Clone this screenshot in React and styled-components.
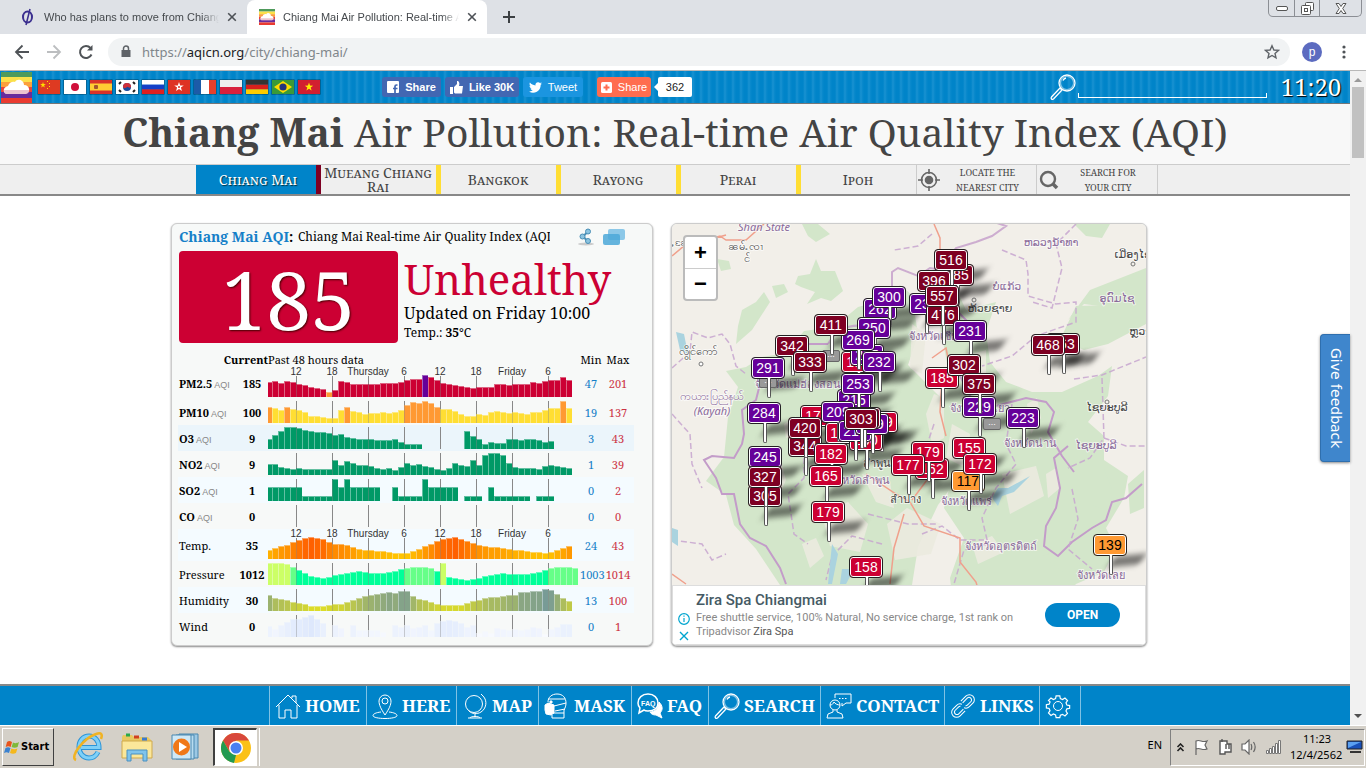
import React from 'react';
import styled, { createGlobalStyle, css } from 'styled-components';

const serif = '"Droid Serif", "Noto Serif", "DejaVu Serif Condensed", "DejaVu Serif", serif';
const sans = '"Liberation Sans", Arial, sans-serif';
const ui = '"Noto Sans", "DejaVu Sans", sans-serif';
const blue = '#0084c9';

const Global = createGlobalStyle`
  *, *::before, *::after { box-sizing: border-box; }
  body { margin: 0; background: #fff; font-family: ${serif}; color: #000; }
  button, input { font: inherit; color: inherit; margin: 0; padding: 0; border: 0; background: none; }
  a { color: inherit; text-decoration: none; }
  svg { display: block; flex: none; }
`;

const Screen = styled.div`
  display: flex;
  flex-direction: column;
  height: 100vh;
  overflow: hidden;
`;

/* ---------- browser frame ---------- */

const TabStrip = styled.header`
  display: flex;
  align-items: stretch;
  height: 34px;
  flex: none;
  background: #dee1e6;
  font: 11px/34px ${sans};
  color: #45494d;
`;

const Tab = styled.div`
  display: flex;
  align-items: center;
  gap: 8px;
  width: ${p => (p.$active ? 240 : 247)}px;
  padding: 0 10px 0 ${p => (p.$active ? 12 : 20)}px;
  border-radius: 8px 8px 0 0;
  background: ${p => (p.$active ? '#fff' : 'transparent')};
`;

const TabTitle = styled.span`
  flex: 1;
  overflow: hidden;
  white-space: nowrap;
  mask-image: linear-gradient(90deg, #000 90%, transparent);
`;

const IconButton = styled.button`
  display: flex;
  align-items: center;
  justify-content: center;
  width: ${p => p.$w || 16}px;
  flex: none;
`;

const WindowButtons = styled.div`
  display: flex;
  height: 17px;
  margin: 0 4px 0 auto;
  border: 1px solid #8b8e94;
  border-top: 0;
  border-radius: 0 0 5px 5px;
  button + button { border-left: 1px solid #8b8e94; }
`;

const Toolbar = styled.div`
  display: flex;
  align-items: center;
  height: 37px;
  flex: none;
  padding-left: 12px;
  background: #fff;
  border-bottom: 1px solid #b8b8b8;
`;

const AddressBar = styled.label`
  display: flex;
  align-items: center;
  gap: 10px;
  flex: 1;
  height: 28px;
  margin: 0 12px;
  padding: 0 10px 0 12px;
  border-radius: 14px;
  background: #f1f3f4;
  font: 13px/28px ${ui};
  color: #80868b;
  b { color: #202124; font-weight: 400; }
`;

const Url = styled.span`
  flex: 1;
`;

const Avatar = styled.button`
  width: 20px;
  height: 20px;
  border-radius: 50%;
  background: #5c6bc0;
  color: #fff;
  font: 12px/20px ${sans};
`;

const Viewport = styled.div`
  display: flex;
  flex: 1;
  min-height: 0;
`;

const Page = styled.div`
  display: flex;
  flex-direction: column;
  flex: 1;
  min-width: 0;
  position: relative;
`;

const Scrollbar = styled.div`
  display: flex;
  flex-direction: column;
  justify-content: space-between;
  width: 16px;
  padding: 6px 2px;
  background: #f1f1f1;
`;

const Thumb = styled.div`
  height: 71px;
  margin: 4px 0 auto;
  background: #c1c1c1;
`;

/* ---------- site header ---------- */

const TopBar = styled.div`
  display: flex;
  align-items: center;
  height: 33px;
  flex: none;
  padding: 0 5px 0 1px;
  border-bottom: 1px solid #777;
  background: repeating-linear-gradient(90deg, ${blue} 0 3px, #0d8bcd 4px, #1b92d1 5px, #0d8bcd 6px, ${blue} 8px);
  color: #fff;
`;

const Flags = styled.nav`
  display: flex;
  gap: 2px;
  width: 345px;
  margin-left: 5px;
`;

const FlagLink = styled.a`
  border: 1px solid rgba(0, 0, 0, 0.25);
  border-radius: 1px;
`;

const Badge = styled.button`
  display: flex;
  align-items: center;
  justify-content: center;
  gap: 6px;
  width: ${p => p.$w}px;
  height: 20px;
  margin-right: ${p => p.$gap || 4}px;
  border-radius: 3px;
  background: ${p => p.$bg || '#4267b2'};
  color: #fff;
  font: ${p => (p.$light ? 500 : 700)} 11px/20px ${sans};
  white-space: nowrap;
`;

const Count = styled.span`
  position: relative;
  width: 34px;
  height: 20px;
  border-radius: 2px;
  background: #fff;
  color: #222;
  font: 11px/20px ${sans};
  text-align: center;
  &::before {
    content: '';
    position: absolute;
    left: -4px;
    top: 6px;
    border: 4px solid transparent;
    border-left: 0;
    border-right-color: #fff;
  }
`;

const TopSearch = styled.label`
  display: flex;
  align-items: flex-end;
  gap: 2px;
  margin-left: auto;
`;

const SearchField = styled.input`
  width: 189px;
  height: 18px;
  margin-bottom: 2px;
  && {
    border: 1px solid #fff;
    border-width: 0 1px 1px;
    border-image: linear-gradient(transparent 75%, #fff 75%) 1;
  }
`;

const Clock = styled.time`
  width: 68px;
  margin-left: 10px;
  font: 24px/32px ${serif};
  text-align: center;
  text-shadow: 1px 1px 1px #000;
`;

const Title = styled.h1`
  margin: 0;
  flex: none;
  height: 60px;
  background: #f8f8f8;
  color: #444;
  font: 400 39px/56px ${serif};
  text-align: center;
  white-space: nowrap;
`;

const CityBar = styled.nav`
  display: flex;
  justify-content: center;
  height: 32px;
  flex: none;
  padding-left: 3px;
  border-top: 1px solid #ccc;
  border-bottom: 2px solid #888;
  background: #efefef;
`;

const City = styled.a`
  display: flex;
  align-items: center;
  justify-content: center;
  width: 120px;
  border-left: ${p => (p.$mark ? `5px solid ${p.$mark}` : '1px solid #ccc')};
  background: ${p => (p.$active ? blue : 'none')};
  color: ${p => (p.$active ? '#fff' : '#444')};
  font: 14px/14px ${serif};
  font-variant: small-caps;
  text-align: center;
  ${p => p.$active && css`text-shadow: 1px 1px 1px #034;`}
`;

const CityAction = styled.button`
  display: flex;
  align-items: center;
  width: ${p => p.$w || 120}px;
  && {
    padding-left: 1px;
    border-left: 1px solid #ccc;
    border-right: ${p => (p.$last ? '1px solid #ccc' : '0')};
  }
  color: #444;
  span { flex: 1; font: 9px/15px ${serif}; text-transform: uppercase; white-space: nowrap; }
`;

/* ---------- cards ---------- */

const Main = styled.main`
  display: flex;
  align-items: flex-start;
  gap: 18px;
  flex: 1;
  min-height: 0;
  width: 100%;
  max-width: 1008px;
  margin: 0 auto;
  padding-top: 27px;
`;

const Card = styled.section`
  display: flex;
  flex-direction: column;
  width: ${p => p.$w}px;
  height: 423px;
  overflow: hidden;
  border: 1px solid #ccc;
  border-radius: 6px;
  background: #f7f9f8;
  box-shadow: 0 1px 2px #888;
`;

const CardHead = styled.div`
  display: flex;
  align-items: center;
  height: 26px;
  padding: 0 26px 0 7px;
  line-height: 24px;
  white-space: nowrap;
`;

const CardTitle = styled.h2`
  flex: none;
  width: 119px;
  margin: 0;
  color: #1580c8;
  font: 700 14px/24px ${serif};
  i { color: #000; font-style: normal; }
`;

const CardSub = styled.span`
  width: 252px;
  margin-right: auto;
  overflow: hidden;
  font-size: 12px;
`;

const Tools = styled.div`
  display: flex;
  gap: 8px;
`;

const Summary = styled.div`
  display: flex;
  align-items: flex-start;
  gap: 6px;
  height: 93px;
  padding: 1px 7px 0;
`;

const Aqi = styled.div`
  width: 219px;
  height: 92px;
  border-radius: 4px;
  background: #cc0033;
  color: #fff;
  font: 80px/96px ${serif};
  text-align: center;
  text-shadow: 1px 1px 2px #400;
`;

const Status = styled.div`
  white-space: nowrap;
  strong { display: block; height: 53px; color: #cc0033; font: 400 42px/56px ${serif}; }
  p { margin: 0; font-size: 16px; line-height: 18px; }
  p + p { font-size: 12px; line-height: 22px; }
`;

const Data = styled.table`
  width: 456px;
  margin: 10px 0 0 6px;
  table-layout: fixed;
  border-collapse: collapse;
  font-size: 11px;
  th, td { padding: 0; white-space: nowrap; text-align: center; font-weight: 400; }
  thead th { height: 14px; line-height: 14px; }
`;

const Col = styled.col`
  width: ${p => p.$w}px;
`;

const HeadCell = styled.th`
  &&& {
    text-align: ${p => p.$align || 'center'};
    font-weight: ${p => (p.$bold ? 700 : 400)};
  }
`;

const Row = styled.tr`
  height: ${p => (p.$axis ? 32 : 26)}px;
  background: ${p => p.$bg || 'transparent'};
  td:nth-child(3) { vertical-align: bottom; padding-bottom: 2px; }
`;

const Name = styled.th`
  &&& { text-align: left; font-weight: ${p => (p.$bold ? 700 : 400)}; padding-left: 1px; }
  small { color: #888; font: 9px ${sans}; }
`;

const Value = styled.td`
  &&& {
    color: ${p => p.$color || '#000'};
    font-weight: ${p => (p.$color ? 400 : 700)};
  }
`;

/* ---------- map ---------- */

const MapArea = styled.div`
  position: relative;
  isolation: isolate;
  flex: 1;
  overflow: hidden;
  background: #f2efe9;
  > svg { position: absolute; inset: 0; width: 100%; height: 100%; z-index: -2; }
`;

const ZoomBox = styled.div`
  position: absolute;
  left: 11px;
  top: 11px;
  display: flex;
  flex-direction: column;
  border: 2px solid #bbb;
  border-radius: 4px;
  background: #fff;
  button { width: 31px; height: 31px; font: 700 22px/30px ${sans}; }
  button + button { border-top: 1px solid #ccc; }
`;

const Pin = styled.a`
  position: absolute;
  left: ${p => p.$x}px;
  top: ${p => p.$y}px;
  width: 34px;
  height: 22px;
  border: 1px solid #222;
  border-radius: 4px;
  background: ${p => p.$bg};
  box-shadow: inset 0 0 0 1px #fff;
  color: ${p => (p.$dark ? '#000' : '#fff')};
  font: 14px/20px ${sans};
  text-align: center;
  &::before {
    content: '';
    position: absolute;
    left: 15px;
    top: 20px;
    width: 4px;
    height: 20px;
    border: 1px solid #555;
    border-top: 0;
    border-radius: 0 0 3px 3px;
    background: #fff;
  }
  &::after {
    content: '';
    position: absolute;
    left: 18px;
    top: 20px;
    width: 30px;
    height: 11px;
    background: rgba(0, 0, 0, 0.5);
    filter: blur(3px);
    transform: skewX(-35deg) rotate(-6deg);
    z-index: -1;
  }
`;

const IdlePin = styled.a`
  position: absolute;
  left: ${p => p.$x}px;
  top: ${p => p.$y}px;
  width: 18px;
  height: 12px;
  border: 1px solid #666;
  border-radius: 2px;
  background: #999;
  color: #fff;
  font: 9px/6px ${sans};
  text-align: center;
`;

const Ad = styled.aside`
  display: flex;
  align-items: center;
  height: 60px;
  padding-right: 25px;
  border: 1px solid #ddd;
  background: #fff;
  font: 11px/14px Roboto, sans-serif;
  color: #888;
`;

const AdMarks = styled.div`
  display: flex;
  flex-direction: column;
  gap: 5px;
  width: 23px;
  padding: 25px 0 0 5px;
`;

const AdText = styled.div`
  flex: 1;
  h3 { margin: 0 0 2px; color: #455a64; font: 500 15px/18px Roboto, sans-serif; }
  p { margin: 0; max-width: 330px; }
  b { color: #555; font-weight: 400; }
`;

const Open = styled.button`
  width: 75px;
  height: 24px;
  border-radius: 12px;
  background: ${blue};
  color: #fff;
  font: 700 12px/24px Roboto, sans-serif;
`;

const Feedback = styled.button`
  position: absolute;
  right: 0;
  top: 263px;
  width: 30px;
  height: 128px;
  border: 1px solid #2f6fae;
  border-right: 0;
  border-radius: 4px 0 0 4px;
  background: #3f86cc;
  box-shadow: 0 1px 3px #888;
  color: #fff;
  font: 14px/26px "DejaVu Sans", sans-serif;
  writing-mode: vertical-rl;
  text-align: center;
`;

/* ---------- site footer and taskbar ---------- */

const FootNav = styled.nav`
  display: flex;
  justify-content: center;
  height: 41px;
  flex: none;
  border-top: 2px solid #888;
  background: ${blue};
  color: #fff;
`;

const FootLink = styled.a`
  display: flex;
  align-items: center;
  gap: 4px;
  width: ${p => p.$w}px;
  padding-left: 5px;
  border-left: 1px solid #7fc1e4;
  font: 700 17px/38px ${serif};
  &:last-child { border-right: 1px solid #7fc1e4; }
`;

const Taskbar = styled.footer`
  display: flex;
  align-items: center;
  height: 43px;
  flex: none;
  padding: 0 1px 0 2px;
  border-top: 1px solid #fff;
  background: #d4d0c8;
  font: 11px/16px ${ui};
`;

const Start = styled.button`
  display: flex;
  align-items: center;
  gap: 1px;
  width: 52px;
  height: 38px;
  && {
    padding-left: 1px;
    border: 1px solid #fff;
    border-right-color: #404040;
    border-bottom-color: #404040;
  }
  font: 700 11px/16px "DejaVu Sans Condensed", "DejaVu Sans", sans-serif;
`;

const Launch = styled.button`
  display: flex;
  align-items: center;
  justify-content: center;
  width: 44px;
  height: 38px;
  margin-left: ${p => p.$gap || 5}px;
  ${p => p.$active && css`
    border: 1px solid #fff;
    border-left: 2px solid #404040;
    border-top: 2px solid #404040;
    background: #fff;
    box-shadow: 2px 0 0 #d4d0c8, 3px 0 0 #fff;
  `}
`;

const Lang = styled.span`
  margin: 0 8px 4px auto;
`;

const Tray = styled.div`
  display: flex;
  align-items: center;
  gap: 8px;
  height: 37px;
  padding: 0 1px 0 5px;
  border: 1px solid #808080;
  border-right-color: #fff;
  border-bottom-color: #fff;
`;

const TrayTime = styled.time`
  width: 52px;
  margin-right: -4px;
  text-align: right;
  white-space: nowrap;
  span { display: block; padding-right: 11px; }
`;

/* ---------- drawings ---------- */

const Stroke = ({ size = 26, box = 26, w = 1, children, color = 'currentColor' }) => (
  <svg width={size} height={size} viewBox={`0 0 ${box} ${box}`} fill="none" stroke={color} strokeWidth={w} aria-hidden="true">
    {children}
  </svg>
);

const Close = () => (
  <Stroke size={10} box={10} w={1.6} color="#4d5156"><path d="M1.2 1.2l7.6 7.6M8.8 1.2L1.2 8.8" /></Stroke>
);

const Logo = ({ size }) => (
  <svg width={size} height={size} viewBox="0 0 31 31" aria-hidden="true">
    <path fill="#4f9a5b" d="M0 0h31v5H0z" />
    <path fill="#fbe04a" d="M0 5h31v5H0z" />
    <path fill="#fba03c" d="M0 10h31v5H0z" />
    <path fill="#e8453a" d="M0 15h31v5H0z" />
    <path fill="#6a2c9c" d="M0 20h31v6H0z" />
    <path fill="#ea3b30" d="M0 26h31v5H0z" />
    <path fill="#fff" d="M6 22c-4 0-5-7 1-8 1-4 5-5 7-4 2-4 9-2 9 3 6 0 7 8 2 9z" />
    <path fill="#d36b85" opacity=".4" d="M3 18h25c0 3-1 4-3 4H6c-2 0-3-2-3-4z" />
  </svg>
);

const star = (x, y, r) => {
  let d = '';
  for (let i = 0; i < 10; i++) {
    const a = (Math.PI * i) / 5 - Math.PI / 2;
    const q = i % 2 ? r * 0.4 : r;
    d += `${i ? 'L' : 'M'}${(x + q * Math.cos(a)).toFixed(2)} ${(y + q * Math.sin(a)).toFixed(2)}`;
  }
  return `${d}z`;
};

const bands = (...c) => c.map((f, i) => <rect key={i} width="22" height={14 / c.length + 0.1} y={(i * 14) / c.length} fill={f} />);

const flags = [
  ['China', <><rect width="22" height="14" fill="#de3a22" /><path fill="#ffde00" d={star(5, 5, 3)} /><path fill="#ffde00" d="M9 1h1v1H9zM11 3h1v1h-1zM11 6h1v1h-1zM9 8h1v1H9z" /></>],
  ['Japan', <><rect width="22" height="14" fill="#fff" /><circle cx="11" cy="7" r="4" fill="#d0103a" /></>],
  ['Spain', <><rect width="22" height="14" fill="#d8322a" /><rect y="3.5" width="22" height="7" fill="#fc3" /><rect x="4" y="5" width="4" height="4" rx="1" fill="#a4552c" /></>],
  ['Korea', <><rect width="22" height="14" fill="#fff" /><circle cx="11" cy="7" r="4" fill="#1a4a9c" /><path fill="#d0303a" d="M7 7a4 4 0 018 0c-2 2-3-1-4 0s-3 2-4 0z" /><path stroke="#222" strokeWidth="2" d="M3 4l2-2M17 2l2 2M3 10l2 2M17 12l2-2" /></>],
  ['Russia', bands('#fff', '#1440c8', '#e02020')],
  ['Hong Kong', <><rect width="22" height="14" fill="#de3224" /><path fill="#fff" d={star(11, 7, 5)} /><circle cx="11" cy="7" r="1" fill="#de3224" /></>],
  ['France', <><rect width="22" height="14" fill="#fff" /><rect width="7" height="14" fill="#1c5ba8" /><rect x="15" width="7" height="14" fill="#e5402c" /></>],
  ['Poland', bands('#eee', '#d8203c')],
  ['Germany', bands('#333', '#d8201c', '#fc0')],
  ['Brazil', <><rect width="22" height="14" fill="#3a9a38" /><path fill="#fd0" d="M11 1l9 6-9 6-9-6z" /><circle cx="11" cy="7" r="3.6" fill="#25357c" /></>],
  ['Vietnam', <><rect width="22" height="14" fill="#d21f30" /><path fill="#fe0" d={star(11, 7, 4.4)} /></>],
];

const Magnifier = ({ size = 26 }) => (
  <Stroke size={size} w={1.3}>
    <circle cx="17" cy="9" r="8" />
    <circle cx="17" cy="9" r="6.6" opacity=".5" />
    <path d="M11.500 14.500l-1 1M10 14l2 2-8.500 9c-1.500 1-3-.5-2-2zM13 6.500c.6-1.400 1.600-2.200 3-2.500" />
  </Stroke>
);

const footItems = [
  ['HOME', 97, <Stroke><path d="M1 14L13 2l12 12M4 12v13h6v-8h6v8h6V12M17 5V3h4v7" /></Stroke>],
  ['HERE', 90, <Stroke><path d="M13 22C9 16 7 12 7 8a6 6 0 0112 0c0 4-2 8-6 14z" /><circle cx="13" cy="8" r="3" /><path d="M9 19c-5 .5-8 2-8 3.500 0 4 24 4 24 0 0-1.500-3-3-8-3.500" /></Stroke>],
  ['MAP', 82, <Stroke><circle cx="12" cy="11" r="8.500" /><path d="M19 1l2 2c5 5 3 13-2 16-4 2.500-9 2-12-1M13 21v2M6 25h14M8 25c0-2 10-2 10 0" /></Stroke>],
  ['MASK', 93, <Stroke><path d="M4 9C4 4 8 1 13 1c6 0 9 4 9 9 0 3-1 5-2 7v8H8v-3M4 6h17M22 10l-12 3M21 16l-10 2M9 20h11" /><path fill="currentColor" d="M1 12l3-2 6 2v8l-3 2-5-1-1-4zM6 8h2v2H6z" /></Stroke>],
  ['FAQ', 77, <Stroke><path strokeWidth="1.500" d="M1 10c0-5 4-9 10-9s10 4 10 9-4 8-10 8c-2 0-3 0-4-1l-5 3 1-5c-1-1-2-3-2-5z" /><path fill="currentColor" d="M22 9c4 4 4 8 1 11l2 5-6-3c-3 0-5-1-6-3 5 0 9-4 9-10z" /><text x="4" y="12.500" fontSize="7" fontFamily="Liberation Sans" stroke="none" fill="currentColor">FAQ</text></Stroke>],
  ['SEARCH', 112, <Magnifier />],
  ['CONTACT', 124, <Stroke><circle cx="9" cy="12" r="5" /><path d="M4 12c2 0 3-1 4-3 1 2 4 3 6 3M7 17v2l-5 2-1 4h16l-1-4-5-2v-2M9 5V1h16v9h-5l-4 3v-3" /><path strokeDasharray="1.500 1.500" d="M13 5.500h9" /></Stroke>],
  ['LINKS', 95, <Stroke><g transform="rotate(-45 13 13)"><path d="M15 8h7a5 5 0 010 10h-5a5 5 0 01-4.500-3" /><path d="M15 10.500h6.500a2.500 2.500 0 010 5H17a2.500 2.500 0 01-2-1" /><path d="M11 18H4A5 5 0 014 8h5a5 5 0 014.500 3" /><path d="M11 15.500H4.500a2.500 2.500 0 010-5H9a2.500 2.500 0 012 1" /></g></Stroke>],
  ['', 42, <Stroke><circle cx="13" cy="13" r="4.500" /><path strokeWidth="1.300" d="M11 2h4l.6 3 2.400 1 2.600-1.700 2.800 2.800L21.700 9.600l1 2.400 3 .6v3l-3 .5-1 2.400 1.600 2.600-2.700 2.700-2.600-1.700-2.400 1-.6 2.600h-4l-.6-3-2.400-1-2.600 1.700-2.700-2.700 1.700-2.600-1-2.400-3-.6v-3.500l3-.6 1-2.400L2.700 7l2.700-2.700L8 6l2.400-1z" transform="translate(1 1) scale(.92)" /></Stroke>],
];

/* ---------- charts ---------- */

const axisLabels = ['12', '18', 'Thursday', '6', '12', '18', 'Friday', '6'];

const mix = (a, b, t) => `rgb(${a.map((v, i) => Math.round(v + (b[i] - v) * t)).join(',')})`;

const green = () => '#009966';

const Bars = ({ values, color, axis, label }) => {
  const h = axis ? 30 : 22;
  return (
    <svg width="312" height={h} role="img" aria-label={label}>
      {axisLabels.map((t, i) => (
        <g key={i}>
          <path d={`M${28.5 + i * 36} ${axis ? 9 : 0}V${h}`} stroke="#888" />
          {axis && (
            <text x={28 + i * 36} y="8" fontSize="10" fontFamily="Liberation Sans" textAnchor="middle" fill="#333">{t}</text>
          )}
        </g>
      ))}
      {values.map((v, i) => v > 0 && (
        <g key={i} fill={color(v, i)}>
          <rect x={i * 6 - 2} y={h - v} width="6" height={v} opacity=".6" />
          <rect x={i * 6 - 1} y={h - v + 1} width="5" height={v - 1} />
        </g>
      ))}
    </svg>
  );
};

const rows = [
  { name: 'PM2.5', aqi: 1, cur: 185, min: 47, max: 201, axis: 1, color: (v, i) => (i === 26 ? '#660099' : i === 10 ? '#ff9933' : '#cc0033'),
    v: [15,16,14,16,15,13,12,10,9,8,5,7,16,15,13,13,13,13,13,14,14,14,15,17,18,18,22,20,17,14,13,12,11,10,9,10,10,10,13,13,12,13,13,13,15,14,16,17,17,20,17] },
  { name: 'PM10', aqi: 1, cur: 100, min: 19, max: 137, color: (v, i) => (v >= 16 ? '#ff9933' : '#ffde33'),
    v: [16,15,13,16,14,13,11,7,7,6,5,5,13,16,12,11,9,10,10,11,10,11,13,18,21,20,22,20,16,14,14,12,9,7,7,9,8,11,12,11,10,11,10,9,11,11,13,15,15,22,15] },
  { name: 'O3', aqi: 1, cur: 9, min: 3, max: 43, bg: '#ebf5fb', color: green,
    v: [10,14,18,22,22,21,19,18,17,17,16,14,15,12,11,10,10,10,9,9,9,10,7,5,5,5,0,0,0,0,0,0,0,18,13,10,5,7,6,6,10,10,9,10,10,9,7,8] },
  { name: 'NO2', aqi: 1, cur: 9, min: 1, max: 39, color: green,
    v: [11,11,8,7,6,7,6,6,6,6,6,15,10,14,12,10,10,9,7,6,7,5,8,12,10,11,9,8,6,5,7,12,10,9,15,10,20,22,22,20,12,8,7,7,7,6,9,10,9,8,7] },
  { name: 'SO2', aqi: 1, cur: 1, min: 0, max: 2, bg: '#f4fbff', color: green,
    v: [14,14,14,14,14,14,5,5,5,5,5,22,14,22,14,14,14,14,14,0,0,14,5,5,5,5,22,14,14,14,14,14,0,5,5,5,0,14,5,5,5,5,5,5,0,5,5,5] },
  { name: 'CO', aqi: 1, cur: 0, min: 0, max: 0, color: green, v: [] },
  { name: 'Temp.', cur: 35, min: 24, max: 43, axis: 1, bg: '#f4fbff', color: v => mix([255, 195, 0], [255, 96, 0], (v - 6) / 16),
    v: [9,11,13,14,17,19,21,22,21,20,17,15,15,14,12,10,9,9,8,8,7,6,6,6,8,10,13,15,18,20,21,22,20,18,16,14,13,12,12,11,10,9,9,8,7,7,6,7,9,11,13] },
  { name: 'Pressure', cur: 1012, min: 1003, max: 1014, color: v => (v > 20 ? '#ccff66' : v > 16 ? '#66ff88' : '#00ff99'),
    v: [22,22,22,21,18,15,12,9,8,7,8,10,11,12,13,14,13,12,12,12,13,14,16,17,18,18,18,17,14,22,8,7,6,5,6,7,9,10,11,12,11,11,11,11,12,13,15,17,18,18,18,17] },
  { name: 'Humidity', cur: 30, min: 13, max: 100, bg: '#f4fbff', color: v => mix([220, 220, 40], [120, 155, 150], (v - 5) / 17),
    v: [16,13,12,11,9,8,7,5,5,5,6,7,7,9,11,13,15,16,17,18,19,18,20,20,15,12,11,9,7,6,6,6,6,8,10,11,13,14,14,15,16,16,19,19,20,20,22,21,17,13,10] },
  { name: 'Wind', cur: 0, min: 0, max: 1, color: v => mix([252, 253, 255], [222, 232, 252], v / 22),
    v: [11,8,12,15,18,18,20,22,18,14,0,12,9,0,12,7,7,7,7,5,0,12,10,12,9,10,12,7,14,16,17,16,14,10,12,4,6,4,9,8,7,8,7,8,10,9,3,8,10,13,13] },
];

/* ---------- map data ---------- */

const maroon = '#7e0023';
const purple = '#660099';
const red = '#cc0033';
const orange = '#ff9933';

const pins = [
  [957, 275, 385, maroon], [934, 281, 396, maroon], [926, 304, 232, purple], [943, 315, 476, maroon],
  [951, 260, 516, maroon], [942, 296, 557, maroon], [970, 331, 231, purple],
  [880, 309, 262, purple], [889, 297, 300, purple], [874, 328, 250, purple], [858, 362, 185, red],
  [867, 355, 215, purple], [858, 340, 269, purple],
  [792, 346, 342, maroon], [831, 325, 411, maroon], [810, 362, 333, maroon],
  [768, 368, 291, purple], [879, 362, 232, purple], [854, 400, 215, purple], [858, 384, 253, purple],
  [764, 413, 284, purple], [817, 416, 170, red], [842, 433, 170, red], [838, 412, 209, purple],
  [805, 446, 344, maroon], [805, 428, 420, maroon],
  [881, 422, 169, red], [866, 440, 200, red], [855, 431, 215, purple], [872, 424, 209, purple], [864, 418, 303, maroon], [861, 419, 303, maroon],
  [831, 454, 182, red], [826, 476, 165, red], [828, 512, 179, red], [866, 567, 158, red],
  [765, 496, 305, maroon], [765, 457, 245, purple], [765, 477, 327, maroon],
  [1063, 344, 463, maroon], [1048, 345, 468, maroon],
  [942, 378, 185, red], [964, 365, 302, maroon], [979, 407, 229, purple], [979, 384, 375, maroon], [1023, 418, 223, purple],
  [932, 469, 162, red], [928, 452, 179, red], [908, 465, 177, red],
  [969, 448, 155, red], [968, 481, 117, orange], [980, 464, 172, red], [1110, 545, 139, orange],
];

const idle = [[831, 356], [768, 382], [992, 424]];

const places = [
  [92, 7, 'Shan State', '#8a6a9a', 1], [73, 26, 'ၼမ်ႉၸၢ', '#444'], [75, 38, 'င်', '#444'], [8, 22, 'မူႇၼႄး', '#444'],
  [26, 131, 'လွိုင်ကော်', '#444'], [40, 176, 'ကယားပြည်နယ်', '#8a6a9a'], [40, 191, '(Kayah)', '#8a6a9a', 1],
  [126, 164, 'จังหวัดแม่ฮ่องสอน', '#8a6a9a'], [379, 22, 'ຫລວງນ້ຳທາ', '#8a6a9a'], [461, 34, 'ເມືອງໄຊ', '#444'],
  [335, 66, 'ບໍ່ແກ້ວ', '#8a6a9a'], [318, 88, 'ຫ້ວຍຊາຍ', '#444'], [445, 78, 'ອຸດົມໄຊ', '#8a6a9a'], [468, 111, 'ຫຼວງ', '#444'],
  [272, 116, 'จังหวัดเชียงราย', '#8a6a9a'], [308, 188, 'จังหวัดพะเยา', '#8a6a9a'], [435, 187, 'ໄຊຍະບູລີ', '#444'], [424, 225, 'ໄຊຍະບູລີ', '#8a6a9a'],
  [358, 223, 'จังหวัดน่าน', '#8a6a9a'], [205, 243, 'ลำพูน', '#444'], [188, 260, 'จังหวัดลำพูน', '#8a6a9a'], [233, 279, 'ลำปาง', '#444'],
  [294, 281, 'จังหวัดแพร่', '#8a6a9a'], [329, 326, 'จังหวัดอุตรดิตถ์', '#8a6a9a'], [429, 355, 'จังหวัดเลย', '#8a6a9a'],
];

const Terrain = () => (
  <svg viewBox="0 0 474 361" preserveAspectRatio="xMidYMid slice" aria-hidden="true">
    <g fill="#d3e6ca">
      <path d="M126 52l12-2 6-15 5 12 14 0 8 20-12 10-10-3-14 6 8-12-14-5-6-3zM70 86l14-8 8-10 6 10-18 28-16 14 2-18zM130 0h16l12 10-14 8-8-6z" />
      <path d="M54 147l20-4 16-10 24-4 18-22 30-4 24-20 30-8 12-14 12 10 6 40-10 30 20 20 30 30 10 50-30 40-20 42-6 38H108l-24-36-22-24-8-30-20-14 18-24 4-40 10-30z" />
      <path d="M260 60l20-4 14 30 30-8-10 30 4 30 16 20 26 10 30 0 36-16 14-10-4 30-20 26 16 14 0 24 24 16-4 22-18 30 10 20-12 24-28 12-22 24-40 8-30 12-28 0-6-50 14-40-20-30 8-30-14-60 10-50z" />
      <path d="M396 96l16-16 62 8V44l-56 22zM402 0h36l-8 14-16-2z" />
      <path d="M404 82l70-2v20l-38 20-24 6-24-10zM420 255l12-10 8 20-10 20-10-4zM456 260l16-14v38l-14 6zM370 332l26-8 18 14-20 12z" />
      <path d="M45 35l12 2 2 8-10 2zM100 62l12-2 4 8-12 6z" />
    </g>
    <g fill="#ecebe0" opacity=".9">
      <path d="M150 290l26-12 20 22-8 28-30-6zM215 300l20-16 34 16-10 30-36 6zM280 200l18 10-4 34-20-10zM190 250l28 8 4 26-18-6zM330 250l34-8 8 30-34 18zM96 240l10-14 8 30-8 18z" />
      <path d="M240 100l14 10-4 40-12-6zM300 130l14-4 0 24-12 6zM112 200l12-8 4 14-14 8zM262 170l10 4 0 40-12 6-6-30zM310 150l12 6 4 30-8 20-10-20zM355 180l10-6 4 20-10 16zM374 250l10-6 4 20-12 10zM300 320l20-8 12 16-26 12zM130 320l14-6 8 18-14 12z" />
    </g>
    <g fill="none" stroke="#c39cc9" strokeWidth="2">
      <path d="M156 120c8-14 20-20 36-18l10-10 6 4 12-14 0-34 6-4 20 8 12-8 12 2M244 78l14-10 10-24 16-20 20-6 16-6 14-10-12-4 6-14" opacity=".8" />
      <path d="M156 120l-34 0-20 22-14 18-4 16-14 10 2 24-2 10-8 14-22-2-8 4 12 18 6 16 12 0 6 30 10 14 16 8 14 22 6 16" />
      <path d="M250 86l10-4-6-14 8-2 8-4 14 24 18 18-4 24-10 24 12 24 24 6 30-8 20 4 8 10-6 20 14 24 12 16" />
      <path d="M396 222l-14 12 6 30-4 20-10 18-2 20 14 10 14-14 20-14 14-8 6-18 14-4 16-14" />
    </g>
    <g fill="none" stroke="#c7a5cf" strokeWidth="1.500" strokeDasharray="6 3" opacity=".85">
      <path d="M0 144l18-16 2-20 16 6 14-4 8 10 6 22 10 8M330 26l24 10 2 14 0 22 28 8 20-2 0 20-40 14-24 20-30 10M404 0l-20 20 6 24-10 40-20-6M402 155l28-4 44-18M430 154l2 60-14 20-22 10M432 214l22 8 20 0M0 190l18 20 2 30 10 24M0 316l30 4 10 16 14-6M196 290l40 10 28 0M262 200l-10 30 12 26M340 180l-6 40 10 20-20 24-14 30 6 26-24 6-10 34M400 265l6 30-10 30 24 20M140 190l-8 34 0 30-16 16 6 40 14 10M210 320l-30-8-20 20-6 24M250 310l20-8 18 14 24 0M260 10l-14 12-24 4" />
    </g>
    <g fill="none" stroke="#f0a08c" strokeWidth="1.500">
      <path d="M0 32l12-10 36-10 6 4 20 0 18-16M30 23l10-8 14-4M262 0l6 14 0 26 8 14M260 134l14-10 4 20-8 10-2 34 6 24M194 250l30 20 14 8 14 24 36 12 0 24 16 20 4 14M240 276l18-24 10-18M232 290l-10 34-4 36M0 350l14 10" />
    </g>
    <g fill="#aad3df">
      <path d="M4 108l8 2 4 20-8-4zM320 274l6-10 10 0 22-12-16 16-12 4-4 10zM0 304l6 2 0 16-6-4zM160 320l6 10-6 30h-4zM170 345l12 0-8 15h-6z" />
    </g>
    <g fill="none" stroke="#777"><circle cx="29" cy="140" r="2" fill="#fff" /><circle cx="302" cy="76" r="2" /><circle cx="461" cy="40" r="2" /><circle cx="435" cy="178" r="2" /></g>
    <g fontFamily="Noto Sans, DejaVu Sans, sans-serif" fontSize="11" textAnchor="middle" stroke="#fff" strokeWidth="2" paintOrder="stroke" strokeOpacity=".6">
      {places.map(([x, y, t, c, it], i) => (
        <text key={i} x={x} y={y} fill={c} fontStyle={it ? 'italic' : 'normal'}>{t}</text>
      ))}
    </g>
  </svg>
);

const cities = [
  ['Chiang Mai', blue, true], ['Mueang Chiang Rai', maroon], ['Bangkok', '#ffde33'],
  ['Rayong', '#ffde33'], ['Perai', '#ffde33'], ['Ipoh', '#ffde33'],
];

export default function App() {
  return (
    <Screen>
      <Global />
      <TabStrip>
        <Tab>
          <svg width="16" height="18" viewBox="0 0 16 18" fill="none" stroke="#3b2f8f"><ellipse cx="7.500" cy="9" rx="4.500" ry="5.500" strokeWidth="2" /><path d="M10 1L6 17" strokeWidth="1.600" /></svg>
          <TabTitle>Who has plans to move from Chiang</TabTitle>
          <IconButton aria-label="Close tab" $w={10}><Close /></IconButton>
        </Tab>
        <Tab $active>
          <Logo size={16} />
          <TabTitle>Chiang Mai Air Pollution: Real-time A</TabTitle>
          <IconButton aria-label="Close tab" $w={10}><Close /></IconButton>
        </Tab>
        <IconButton aria-label="New tab" $w={44}>
          <Stroke size={12} box={12} w={2} color="#3c4043"><path d="M6 0v12M0 6h12" /></Stroke>
        </IconButton>
        <WindowButtons>
          <IconButton aria-label="Minimize" $w={25}><svg width="12" height="5"><rect x=".5" y=".5" width="11" height="4" rx="1.500" fill="#fff" stroke="#555" /></svg></IconButton>
          <IconButton aria-label="Restore" $w={25}><Stroke size={13} box={13} color="#555"><rect x="4.500" y=".5" width="8" height="8" rx="1" fill="#fff" /><rect x=".5" y="3.500" width="9" height="9" rx="1" fill="#fff" /><rect x="3.500" y="6.500" width="3" height="3" /></Stroke></IconButton>
          <IconButton aria-label="Close" $w={42}><svg width="12" height="11" viewBox="0 0 12 11"><path d="M1 .5h3l2 3 2-3h3L7.700 5.500l3.300 5H8l-2-3-2 3H1l3.300-5z" fill="#fff" stroke="#555" /></svg></IconButton>
        </WindowButtons>
      </TabStrip>
      <Toolbar>
        <IconButton aria-label="Back" $w={20}><Stroke size={16} box={16} w={1.8} color="#4f5357"><path d="M15 8H2M8.500 1.500L2 8l6.500 6.500" /></Stroke></IconButton>
        <IconButton aria-label="Forward" $w={44}><Stroke size={16} box={16} w={1.8} color="#bcbec0"><path d="M1 8h13M7.500 1.500L14 8l-6.500 6.500" /></Stroke></IconButton>
        <IconButton aria-label="Reload" $w={20}><Stroke size={16} box={16} w={2} color="#4f5357"><path d="M13.500 10.500A6 6 0 1112.500 4" /><path d="M14.500 1v5.500H9z" fill="#4f5357" stroke="none" /></Stroke></IconButton>
        <AddressBar>
          <svg width="12" height="14" viewBox="0 0 12 14"><path fill="#5f6368" d="M2 5h8.500v7H1.500V5z" /><path d="M3.500 6V3.500a2.500 2.500 0 015 0V6" fill="none" stroke="#5f6368" strokeWidth="1.500" /></svg>
          <Url>https://<b>aqicn.org</b>/city/chiang-mai/</Url>
          <Stroke size={16} box={16} w={1.4} color="#5f6368"><path d="M8 1.800l1.900 4.200 4.500.4-3.400 3 1 4.500-4-2.400-4 2.400 1-4.500-3.400-3 4.500-.4z" /></Stroke>
        </AddressBar>
        <Avatar aria-label="Profile">p</Avatar>
        <IconButton aria-label="Menu" $w={44}><svg width="4" height="14" fill="#4f5357"><circle cx="2" cy="2" r="1.600" /><circle cx="2" cy="7" r="1.600" /><circle cx="2" cy="12" r="1.600" /></svg></IconButton>
      </Toolbar>

      <Viewport>
        <Page>
          <TopBar>
            <a href="#home" aria-label="Home"><Logo size={31} /></a>
            <Flags>
              {flags.map(([n, art]) => (
                <FlagLink key={n} href={`#${n}`} aria-label={n}><svg width="22" height="14" viewBox="0 0 22 14">{art}</svg></FlagLink>
              ))}
            </Flags>
            <Badge $w={59}>
              <svg width="12" height="12" viewBox="0 0 12 12"><rect width="12" height="12" rx="1" fill="#fff" /><path d="M10.500 4H9.500C8.500 4 8 4.600 8 5.500V12M6 7.500h4.500" stroke="#4267b2" strokeWidth="1.700" fill="none" /></svg>
              Share
            </Badge>
            <Badge $w={74}>
              <svg width="13" height="13" viewBox="0 0 13 13" fill="#fff"><path d="M0 6h3v7H0zM4 6l3-3V0c2 0 3 2 2 5h4l-1 7.500H5l-1-1z" /></svg>
              Like 30K
            </Badge>
            <Badge $w={60} $gap={14} $bg="#1b95e0" $light>
              <svg width="13" height="11" viewBox="0 0 24 20" fill="#fff"><path d="M24 2.400c-.9.400-1.800.7-2.800.8 1-.6 1.800-1.600 2.200-2.700-1 .6-2 1-3.100 1.200A4.900 4.900 0 0012 6.200C7.900 6 4.200 4 1.700.9.400 3.100 1 6 3.200 7.500c-.8 0-1.600-.2-2.200-.6 0 2.300 1.600 4.400 3.900 4.900-.7.200-1.500.2-2.200.1.600 2 2.400 3.400 4.600 3.400A9.900 9.900 0 010 17.300 14 14 0 0021.500 5c1-.7 1.800-1.600 2.500-2.600z" /></svg>
              Tweet
            </Badge>
            <Badge $w={54} $gap={7} $bg="#ff6d4f" $light>
              <svg width="11" height="11" viewBox="0 0 11 11"><rect width="11" height="11" rx="1.500" fill="#fff" /><path d="M5.500 2.500v6M2.500 5.500h6" stroke="#ff6d4f" strokeWidth="2" /></svg>
              Share
            </Badge>
            <Count>362</Count>
            <TopSearch>
              <Magnifier />
              <SearchField type="text" aria-label="Search" />
            </TopSearch>
            <Clock>11:20</Clock>
          </TopBar>
          <Title><b>Chiang Mai</b> Air Pollution: Real-time Air Quality Index (AQI)</Title>
          <CityBar>
            {cities.map(([n, mark, active]) => (
              <City key={n} href={`#${n}`} $mark={mark} $active={active}>{n}</City>
            ))}
            <CityAction>
              <Stroke size={22} box={22} w={1.6} color="#666"><circle cx="11" cy="11" r="7.500" /><circle cx="11" cy="11" r="3.500" fill="#666" /><path d="M11 0v5M11 17v5M0 11h5M17 11h5" /></Stroke>
              <span>Locate the<br />nearest city</span>
            </CityAction>
            <CityAction $last $w={122}>
              <Stroke size={22} box={22} w={2.4} color="#666"><circle cx="10" cy="10" r="7" /><path d="M15 15l4 4" strokeWidth="3.500" /></Stroke>
              <span>Search for<br />your city</span>
            </CityAction>
          </CityBar>

          <Main>
            <Card $w={482}>
              <CardHead>
                <CardTitle>Chiang Mai AQI<i>:</i></CardTitle>
                <CardSub>Chiang Mai Real-time Air Quality Index (AQI)</CardSub>
                <Tools>
                  <IconButton aria-label="Share"><svg width="16" height="18" viewBox="0 0 16 18"><ellipse cx="8" cy="16" rx="8" ry="1.500" fill="#ccc" /><path d="M10 3.500L5 8.500l5 5" stroke="#4a8fb5" strokeWidth="2" fill="none" /><g fill="#8cc4e0" stroke="#4a8fb5"><circle cx="10" cy="3.500" r="2.500" /><circle cx="4.500" cy="8.500" r="2.500" /><circle cx="10" cy="13" r="2.500" /></g></svg></IconButton>
                  <IconButton aria-label="Windows" $w={24}><svg width="22" height="16"><rect x="5" width="17" height="11" rx="2" fill="#8cc8e8" /><rect y="5" width="17" height="11" rx="2" fill="#4ba8d8" opacity=".85" /></svg></IconButton>
                </Tools>
              </CardHead>
              <Summary>
                <Aqi>185</Aqi>
                <Status>
                  <strong>Unhealthy</strong>
                  <p>Updated on Friday 10:00</p>
                  <p>Temp.: <b>35</b>°C</p>
                </Status>
              </Summary>
              <Data>
                <colgroup><Col $w={58} /><Col $w={32} /><Col $w={312} /><Col $w={22} /><Col $w={32} /></colgroup>
                <thead>
                  <tr>
                    <HeadCell colSpan="2" $align="right" $bold>Current</HeadCell>
                    <HeadCell $align="left">Past 48 hours data</HeadCell>
                    <HeadCell>Min</HeadCell>
                    <HeadCell>Max</HeadCell>
                  </tr>
                </thead>
                <tbody>
                  {rows.map(r => (
                    <Row key={r.name} $axis={r.axis} $bg={r.bg}>
                      <Name scope="row" $bold={r.aqi}>{r.name}{r.aqi && <small> AQI</small>}</Name>
                      <Value>{r.cur}</Value>
                      <td><Bars values={r.v} color={r.color} axis={r.axis} label={r.name} /></td>
                      <Value $color="#1580c8">{r.min}</Value>
                      <Value $color="#cc3344">{r.max}</Value>
                    </Row>
                  ))}
                </tbody>
              </Data>
            </Card>

            <Card $w={476}>
              <MapArea>
                <Terrain />
                {idle.map(([x, y]) => (
                  <IdlePin key={x} href={`#offline-${x}`} $x={x - 681} $y={y - 230}>...</IdlePin>
                ))}
                {pins.map(([x, y, v, bg], i) => (
                  <Pin key={i} href={`#station-${i}`} $x={x - 689} $y={y - 235} $bg={bg} $dark={bg === orange}>{v}</Pin>
                ))}
                <ZoomBox>
                  <button aria-label="Zoom in">+</button>
                  <button aria-label="Zoom out">−</button>
                </ZoomBox>
              </MapArea>
              <Ad>
                <AdMarks>
                  <Stroke size={12} box={12} w={1.2} color="#00a5cf"><circle cx="6" cy="6" r="5.300" /><path d="M6 5v4M6 2.500v1.300" /></Stroke>
                  <Stroke size={12} box={12} w={1.4} color="#00a5cf"><path d="M2 2l8 8M10 2l-8 8" /></Stroke>
                </AdMarks>
                <AdText>
                  <h3>Zira Spa Chiangmai</h3>
                  <p>Free shuttle service, 100% Natural, No service charge, 1st rank on Tripadvisor <b>Zira Spa</b></p>
                </AdText>
                <Open>OPEN</Open>
              </Ad>
            </Card>
          </Main>

          <FootNav>
            {footItems.map(([t, w, icon]) => (
              <FootLink key={t} href={`#${t.toLowerCase()}`} $w={w} aria-label={t || 'Settings'}>{icon}{t}</FootLink>
            ))}
          </FootNav>
          <Feedback>Give feedback</Feedback>
        </Page>
        <Scrollbar>
          <svg width="12" height="6"><path d="M2 5l4-4 4 4z" fill="#999" /></svg>
          <Thumb />
          <svg width="12" height="6"><path d="M2 1l4 4 4-4z" fill="#505050" /></svg>
        </Scrollbar>
      </Viewport>

      <Taskbar>
        <Start>
          <svg width="16" height="15" viewBox="0 0 16 15"><path fill="#e8541c" d="M3 2c2-1.500 3-1 5 0L6.700 7c-2-1-3-1-5 0z" /><path fill="#7fb93a" d="M9 2.500c2 1 3.500 1 6-.5l-1.400 5c-2 1-4 1-6 0z" /><path fill="#3b82d0" d="M1.500 8c2-1 3-1 5 0L5 13c-2-1-3-1-5 0z" /><path fill="#f5b81c" d="M7.400 8.500c2 1 4 1 6 0L12 13c-2 1-4 1-6 0z" /></svg>
          Start
        </Start>
        <Launch aria-label="Internet Explorer" $gap={12}>
          <svg width="32" height="32" viewBox="0 0 32 32" fill="none"><path d="M26 21c-2 4-5 6-9 6-6 0-10-5-10-11S11 5 17 5s10 5 10 11.500H9" stroke="#2b94d8" strokeWidth="5" /><path d="M26 21c-2 4-5 6-9 6-6 0-10-5-10-11S11 5 17 5s10 5 10 11.500H9" stroke="#7fd0f7" strokeWidth="3" /><path d="M4 29C-3 26 12 7 24 3c5-2 7 0 5 5" stroke="#f0b323" strokeWidth="2.500" /></svg>
        </Launch>
        <Launch aria-label="Explorer">
          <svg width="32" height="30" viewBox="0 0 32 30"><path fill="#e8c860" d="M2 3h9l2 2h14l3 3v18H1V5z" /><path fill="#fbe79a" stroke="#cfa94c" d="M1 9h30v17H1z" /><path stroke="#2aa84a" strokeWidth="3" d="M5 3h4" /><path stroke="#d04020" strokeWidth="3" d="M13 5h5" /><path stroke="#3a7ad0" strokeWidth="3" d="M21 7h5" /><path fill="#7fc4ec" stroke="#4a90c0" d="M6 18h20v11h-4v-7H10v7H6z" /></svg>
        </Launch>
        <Launch aria-label="Media Player">
          <svg width="30" height="28" viewBox="0 0 30 28"><path fill="#9cc8e4" stroke="#4a88b0" d="M8 1h19v24H8z" /><path fill="#b8dcf0" stroke="#4a88b0" d="M5 2h18v24H5z" /><path fill="#cfe8f6" stroke="#4a88b0" d="M1 2h19v24H1z" /><circle cx="10.500" cy="14" r="8.500" fill="#f07818" /><path fill="#fff" d="M8 9l8 5-8 5z" /></svg>
        </Launch>
        <Launch aria-label="Chrome" $active>
          <svg width="30" height="30" viewBox="0 0 30 30"><circle cx="15" cy="15" r="15" fill="#fbc116" /><path fill="#d8483c" d="M2 7.500A15 15 0 0128 7.500H15l-6.500 11z" /><path fill="#229a52" d="M2 7.500l6.500 11.200L15 22l-2 7.900A15 15 0 012 7.500z" /><circle cx="15" cy="15" r="7" fill="#fff" /><circle cx="15" cy="15" r="5.500" fill="#4a80f0" /></svg>
        </Launch>
        <Lang>EN</Lang>
        <Tray>
          <Stroke size={9} box={9} w={1.6} color="#222"><path d="M1.500 4l3-3 3 3M1.500 8l3-3 3 3" /></Stroke>
          <Stroke size={16} box={16} w={1.2} color="#666"><path d="M3 16V2c4-2 6 2 11 0l-2 4 2 4c-5 2-7-2-11 0" fill="#fff" /></Stroke>
          <Stroke size={16} box={16} w={1.4} color="#555"><path d="M3 2h7v3h4v8H8v2H3z" fill="#fff" /><path d="M9 5v5M12 5v5M5 0v3" /></Stroke>
          <Stroke size={16} box={16} w={1.2} color="#666"><path d="M1 5h3l4-4v14l-4-4H1z" fill="#fff" /><path d="M10 5c1 2 1 4 0 6M12.500 3c2 3 2 7 0 10" /></Stroke>
          <svg width="17" height="14" fill="#fff" stroke="#777"><path d="M1.500 10.500h2v3h-2zM4.500 8.500h2v5h-2zM7.500 6.500h2v7h-2zM10.500 3.500h2v10h-2zM13.500.5h2v13h-2z" /></svg>
          <TrayTime><span>11:23</span>12/4/2562</TrayTime>
          <svg width="17" height="14" viewBox="0 0 17 14"><path fill="#1850b8" stroke="#222" d="M1 1h15v8H1z" /><path fill="#5aa0f0" d="M2 2h13L2 8z" /><path fill="#333" d="M4 11h11v2H4z" /></svg>
        </Tray>
      </Taskbar>
    </Screen>
  );
}
